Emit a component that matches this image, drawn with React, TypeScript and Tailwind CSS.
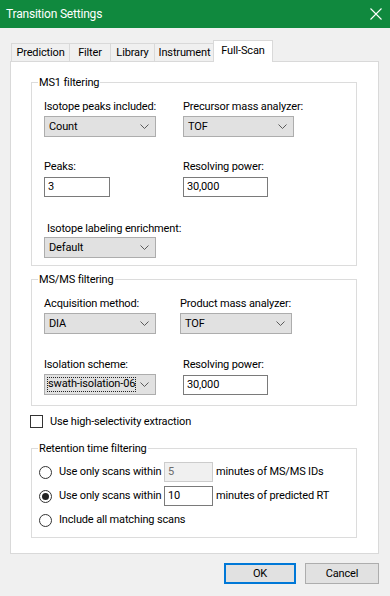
import React from 'react';

const font = 'font-[Roboto,"Liberation_Sans",Arial,sans-serif]';

const Chevron = () => (
  <svg width="9" height="5" viewBox="0 0 9 5" className="shrink-0">
    <polyline points="0.5,0.5 4.5,4.5 8.5,0.5" fill="none" stroke="#5a5a5a" strokeWidth="1" />
  </svg>
);

const Combo = ({ value, width, focused }: { value: string; width: string; focused?: boolean }) => (
  <div className={`${width} h-[21px] flex items-center justify-between bg-[#e1e1e1] border border-[#adadad] pl-[2px] pr-[6px]`}>
    {focused ? (
      <span className="w-[89px] h-[15px] overflow-hidden whitespace-nowrap leading-[14px] pl-[1px] outline-1 outline-dotted outline-[#222] -outline-offset-1">
        {value}
      </span>
    ) : (
      <span className="pl-[2px] leading-[15px]">{value}</span>
    )}
    <Chevron />
  </div>
);

const TextBox = ({ value, width, disabled }: { value: string; width: string; disabled?: boolean }) => (
  <div
    className={`${width} h-[20px] flex items-center pl-[3px] border ${
      disabled ? 'bg-[#f0f0f0] border-[#cccccc] text-[#6d6d6d]' : 'bg-white border-[#7a7a7a]'
    }`}
  >
    {value}
  </div>
);

const Label = ({ children, className = '' }: { children: React.ReactNode; className?: string }) => (
  <div className={`leading-[15px] whitespace-nowrap ${className}`}>{children}</div>
);

const Radio = ({ checked }: { checked?: boolean }) => (
  <div className="w-[13px] h-[13px] rounded-full border border-[#333] bg-white flex items-center justify-center shrink-0">
    {checked && <div className="w-[7px] h-[7px] rounded-full bg-[#222]" />}
  </div>
);

const tabs = [
  { name: 'Prediction', w: 'w-[58px]' },
  { name: 'Filter', w: 'w-[41px]' },
  { name: 'Library', w: 'w-[44px]' },
  { name: 'Instrument', w: 'w-[60px]' },
];

export default function App() {
  return (
    <div className={`w-[390px] h-[596px] bg-[#f0f0f0] flex flex-col text-[11px] tracking-[-0.15px] text-black ${font}`}>
      {/* title bar */}
      <div className="h-[28px] bg-[#10893e] flex items-center justify-between pl-[6px] pr-[5px] shrink-0">
        <span className="text-white text-[12px] tracking-[-0.2px] leading-none">Transition Settings</span>
        <svg width="12" height="12" viewBox="0 0 12 12" className="mr-[3px]">
          <path d="M0.5 0.5 L11.5 11.5 M11.5 0.5 L0.5 11.5" stroke="#ffffff" strokeWidth="1.1" />
        </svg>
      </div>

      {/* tabs */}
      <div className="mt-[12px] ml-[11px] h-[21px] flex items-end shrink-0">
        {tabs.map((t) => (
          <div
            key={t.name}
            className={`${t.w} h-[18px] border-t border-l border-[#d9d9d9] bg-[#f0f0f0] flex items-center justify-center leading-none whitespace-nowrap`}
          >
            {t.name}
          </div>
        ))}
        <div className="relative z-10 -mb-px -ml-[1px] w-[60px] h-[22px] border-t border-l border-r border-[#d9d9d9] bg-white flex items-start justify-center pt-[4px] leading-none">
          Full-Scan
        </div>
      </div>

      {/* tab page */}
      <div className="ml-[10px] w-[369px] h-[493px] border border-[#d9d9d9] bg-white shrink-0 flex flex-col pl-[20px] pt-[13px]">
        {/* MS1 filtering */}
        <fieldset className="w-[326px] border border-[#dcdcdc]">
          <legend className="ml-[6px] px-[1px] leading-[15px]">MS1 filtering</legend>
          <div className="pl-[12px] pb-[7px]">
            <div className="pt-[9px] grid grid-cols-[139px_1fr]">
              <div className="flex flex-col">
                <Label>Isotope peaks included:</Label>
                <div className="mt-[2px]"><Combo value="Count" width="w-[112px]" /></div>
              </div>
              <div className="flex flex-col">
                <Label>Precursor mass analyzer:</Label>
                <div className="mt-[2px]"><Combo value="TOF" width="w-[111px]" /></div>
              </div>
              <div className="flex flex-col mt-[22px]">
                <Label>Peaks:</Label>
                <div className="mt-[3px]"><TextBox value="3" width="w-[66px]" /></div>
              </div>
              <div className="flex flex-col mt-[22px]">
                <Label>Resolving power:</Label>
                <div className="mt-[3px]"><TextBox value="30,000" width="w-[85px]" /></div>
              </div>
            </div>
            <div className="flex flex-col mt-[24px]">
              <Label className="pl-[3px]">Isotope labeling enrichment:</Label>
              <div className="mt-[1px]"><Combo value="Default" width="w-[112px]" /></div>
            </div>
          </div>
        </fieldset>

        {/* MS/MS filtering */}
        <fieldset className="mt-[6px] w-[326px] border border-[#dcdcdc]">
          <legend className="ml-[6px] px-[1px] leading-[15px]">MS/MS filtering</legend>
          <div className="pl-[12px] pb-[10px] pt-[9px] grid grid-cols-[136px_1fr]">
            <div className="flex flex-col">
              <Label>Acquisition method:</Label>
              <div className="mt-[2px]"><Combo value="DIA" width="w-[112px]" /></div>
            </div>
            <div className="flex flex-col">
              <Label>Product mass analyzer:</Label>
              <div className="mt-[2px]"><Combo value="TOF" width="w-[112px]" /></div>
            </div>
            <div className="flex flex-col mt-[23px]">
              <Label>Isolation scheme:</Label>
              <div className="mt-[2px]"><Combo value="swath-isolation-068" width="w-[112px]" focused /></div>
            </div>
            <div className="flex flex-col mt-[23px] pl-[3px]">
              <Label>Resolving power:</Label>
              <div className="mt-[3px]"><TextBox value="30,000" width="w-[85px]" /></div>
            </div>
          </div>
        </fieldset>

        {/* checkbox */}
        <div className="mt-[9px] -ml-[1px] flex items-center gap-[7px] h-[13px]">
          <div className="w-[13px] h-[13px] border border-[#333] bg-white shrink-0" />
          <span className="leading-[13px]">Use high-selectivity extraction</span>
        </div>

        {/* Retention time filtering */}
        <fieldset className="mt-[13px] w-[326px] border border-[#dcdcdc]">
          <legend className="ml-[6px] px-[1px] leading-[15px]">Retention time filtering</legend>
          <div className="pl-[7px] pb-[7px] pt-[6px] flex flex-col gap-[4px]">
            <div className="h-[20px] flex items-center">
              <Radio />
              <span className="ml-[7px] w-[105px] whitespace-nowrap">Use only scans within</span>
              <TextBox value="5" width="w-[49px]" disabled />
              <span className="ml-[3px] whitespace-nowrap">minutes of MS/MS IDs</span>
            </div>
            <div className="h-[20px] flex items-center">
              <Radio checked />
              <span className="ml-[7px] w-[105px] whitespace-nowrap">Use only scans within</span>
              <TextBox value="10" width="w-[49px]" />
              <span className="ml-[3px] whitespace-nowrap">minutes of predicted RT</span>
            </div>
            <div className="h-[20px] flex items-center">
              <Radio />
              <span className="ml-[7px] whitespace-nowrap">Include all matching scans</span>
            </div>
          </div>
        </fieldset>
      </div>

      {/* buttons */}
      <div className="mt-[9px] flex justify-end gap-[9px] pr-[11px]">
        <button className="w-[72px] h-[21px] bg-[#e1e1e1] border-2 border-[#0078d7] leading-none">OK</button>
        <button className="w-[74px] h-[21px] bg-[#e1e1e1] border border-[#adadad] leading-none">Cancel</button>
      </div>
    </div>
  );
}
